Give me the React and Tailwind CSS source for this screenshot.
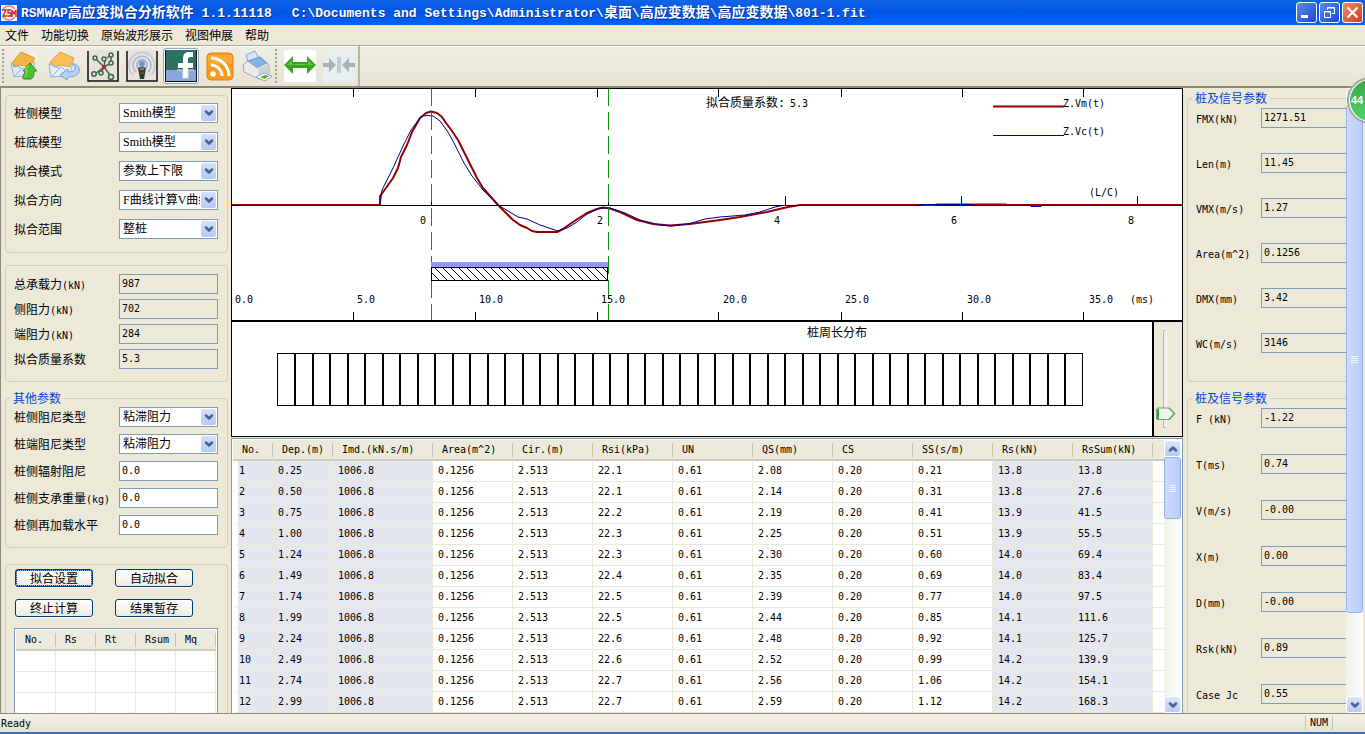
import React from "react";
import { ChevronDown, ChevronUp } from "lucide-react";

const menus = ["文件", "功能切换", "原始波形展示", "视图伸展", "帮助"];

const modelSelects = [
  { label: "桩侧模型", value: "Smith模型" },
  { label: "桩底模型", value: "Smith模型" },
  { label: "拟合模式", value: "参数上下限" },
  { label: "拟合方向", value: "F曲线计算V曲线" },
  { label: "拟合范围", value: "整桩" },
];

const results = [
  { label: "总承载力(kN)", value: "987" },
  { label: "侧阻力(kN)", value: "702" },
  { label: "端阻力(kN)", value: "284" },
  { label: "拟合质量系数", value: "5.3" },
];

const dampingSelects = [
  { label: "桩侧阻尼类型", value: "粘滞阻力" },
  { label: "桩端阻尼类型", value: "粘滞阻力" },
];

const otherInputs = [
  { label: "桩侧辐射阻尼", value: "0.0" },
  { label: "桩侧支承重量(kg)", value: "0.0" },
  { label: "桩侧再加载水平", value: "0.0" },
];

const signalA = [
  { label: "FMX(kN)", value: "1271.51" },
  { label: "Len(m)", value: "11.45" },
  { label: "VMX(m/s)", value: "1.27" },
  { label: "Area(m^2)", value: "0.1256" },
  { label: "DMX(mm)", value: "3.42" },
  { label: "WC(m/s)", value: "3146" },
];

const signalB = [
  { label: "F (kN)", value: "-1.22" },
  { label: "T(ms)", value: "0.74" },
  { label: "V(m/s)", value: "-0.00" },
  { label: "X(m)", value: "0.00" },
  { label: "D(mm)", value: "-0.00" },
  { label: "Rsk(kN)", value: "0.89" },
  { label: "Case Jc", value: "0.55" },
];

const columns = [
  { name: "No.", width: "w-[40px]", shaded: true },
  { name: "Dep.(m)", width: "w-[60px]", shaded: true },
  { name: "Imd.(kN.s/m)", width: "w-[100px]", shaded: true },
  { name: "Area(m^2)", width: "w-[80px]" },
  { name: "Cir.(m)", width: "w-[80px]" },
  { name: "Rsi(kPa)", width: "w-[80px]" },
  { name: "UN", width: "w-[80px]" },
  { name: "QS(mm)", width: "w-[80px]" },
  { name: "CS", width: "w-[80px]" },
  { name: "SS(s/m)", width: "w-[80px]" },
  { name: "Rs(kN)", width: "w-[80px]", shaded: true },
  { name: "RsSum(kN)", width: "w-[80px]", shaded: true },
];

const rows = [
  ["1", "0.25", "1006.8", "0.1256", "2.513", "22.1", "0.61", "2.08", "0.20", "0.21", "13.8", "13.8"],
  ["2", "0.50", "1006.8", "0.1256", "2.513", "22.1", "0.61", "2.14", "0.20", "0.31", "13.8", "27.6"],
  ["3", "0.75", "1006.8", "0.1256", "2.513", "22.2", "0.61", "2.19", "0.20", "0.41", "13.9", "41.5"],
  ["4", "1.00", "1006.8", "0.1256", "2.513", "22.3", "0.61", "2.25", "0.20", "0.51", "13.9", "55.5"],
  ["5", "1.24", "1006.8", "0.1256", "2.513", "22.3", "0.61", "2.30", "0.20", "0.60", "14.0", "69.4"],
  ["6", "1.49", "1006.8", "0.1256", "2.513", "22.4", "0.61", "2.35", "0.20", "0.69", "14.0", "83.4"],
  ["7", "1.74", "1006.8", "0.1256", "2.513", "22.5", "0.61", "2.39", "0.20", "0.77", "14.0", "97.5"],
  ["8", "1.99", "1006.8", "0.1256", "2.513", "22.5", "0.61", "2.44", "0.20", "0.85", "14.1", "111.6"],
  ["9", "2.24", "1006.8", "0.1256", "2.513", "22.6", "0.61", "2.48", "0.20", "0.92", "14.1", "125.7"],
  ["10", "2.49", "1006.8", "0.1256", "2.513", "22.6", "0.61", "2.52", "0.20", "0.99", "14.2", "139.9"],
  ["11", "2.74", "1006.8", "0.1256", "2.513", "22.7", "0.61", "2.56", "0.20", "1.06", "14.2", "154.1"],
  ["12", "2.99", "1006.8", "0.1256", "2.513", "22.7", "0.61", "2.59", "0.20", "1.12", "14.2", "168.3"],
];

// Latin runs are set in a 6px wide monospace beside the 12px hanzi
const Mixed = ({ text }) =>
  text.split(/([\x20-\x7e]+)/).map((part, i) =>
    i % 2 ? (
      <span key={i} className="font-['DejaVu_Sans_Mono',monospace] text-[10px] whitespace-pre">
        {part}
      </span>
    ) : (
      part
    )
  );

const SelectRow = ({ id, label, value }) => (
  <div className="flex h-5 items-center">
    <label htmlFor={id} className="w-[105px] shrink-0 whitespace-nowrap">
      <Mixed text={label} />
    </label>
    <div className="relative h-5 w-[99px] border border-[#7f9db9] bg-white">
      <select
        id={id}
        className="block h-full w-[80px] appearance-none overflow-hidden bg-transparent pl-[3px] font-['Liberation_Serif','Noto_Sans_CJK_SC',sans-serif] text-[12px] leading-4 text-clip outline-none"
      >
        <option>{value}</option>
      </select>
      <span className="pointer-events-none absolute top-px right-px flex h-4 w-[15px] items-center justify-center rounded-[2px] bg-gradient-to-b from-[#d3e0fd] to-[#b4c9f9]">
        <ChevronDown className="h-3 w-3 text-[#4d6185]" strokeWidth={5} />
      </span>
    </div>
  </div>
);

const InputRow = ({ id, label, value, readOnly }) => (
  <div className="flex h-5 items-center">
    <label htmlFor={id} className="w-[105px] shrink-0 whitespace-nowrap">
      <Mixed text={label} />
    </label>
    <input
      id={id}
      defaultValue={value}
      readOnly={readOnly}
      className={`h-5 w-[99px] border border-[#7f9db9] px-[2px] pb-[2px] font-['DejaVu_Sans_Mono',monospace] text-[10px] outline-none ${
        readOnly ? "bg-[#ece9d8]" : "bg-white"
      }`}
    />
  </div>
);

const SignalGroup = ({ prefix, items, gap }) => (
  <fieldset className="w-[200px] rounded border border-[#d0d0bf] pt-[2px] pr-2 pb-7 pl-2">
    <legend className="-ml-1 px-[3px] leading-4 text-[#0046d5]">桩及信号参数</legend>
    <div className={`flex flex-col ${gap}`}>
      {items.map((item) => (
        <div key={item.label} className="flex h-5 items-center">
          <label htmlFor={prefix + item.label} className="w-[65px] shrink-0 whitespace-nowrap">
            <Mixed text={item.label} />
          </label>
          <input
            id={prefix + item.label}
            readOnly
            defaultValue={item.value}
            className="h-5 w-[110px] border border-[#7f9db9] bg-[#ece9d8] px-[2px] pb-[2px] font-['DejaVu_Sans_Mono',monospace] text-[10px] outline-none"
          />
        </div>
      ))}
    </div>
  </fieldset>
);

const XpButton = ({ children, active }) => (
  <button
    className={`h-[18px] w-[78px] rounded-[3px] border border-[#003c74] bg-gradient-to-b from-white to-[#eceadf] p-px leading-[14px] shadow-[0_1px_0_#fff] ${
      active ? "ring-1 ring-[#8fb0ee] ring-inset" : ""
    }`}
  >
    <span className={active ? "block outline-1 outline-dotted outline-[#444]" : "block"}>{children}</span>
  </button>
);

const ScrollBar = ({ thumb }) => (
  <div className="flex w-[17px] shrink-0 flex-col bg-gradient-to-r from-[#f0efe9] to-[#fefefb]">
    <button
      aria-label="Scroll up"
      className="flex h-[17px] shrink-0 items-center justify-center rounded-[3px] border border-white bg-gradient-to-b from-[#dbe6fe] to-[#b7cbfa]"
    >
      <ChevronUp className="h-3 w-3 text-[#4d6185]" strokeWidth={5} />
    </button>
    <div className="min-h-0 flex-1">
      <div
        className={`flex w-full flex-col items-center justify-center gap-px rounded-[3px] border border-[#98b1e4] bg-gradient-to-r from-[#cbdafe] to-[#b9ccfb] ${thumb}`}
      >
        {[0, 1, 2, 3].map((n) => (
          <span key={n} className="h-px w-[7px] bg-[#eef4fe]" />
        ))}
      </div>
    </div>
    <button
      aria-label="Scroll down"
      className="flex h-[17px] shrink-0 items-center justify-center rounded-[3px] border border-white bg-gradient-to-b from-[#dbe6fe] to-[#b7cbfa]"
    >
      <ChevronDown className="h-3 w-3 text-[#4d6185]" strokeWidth={5} />
    </button>
  </div>
);

const TitleBar = () => (
  <header className="flex h-[25px] shrink-0 items-center bg-gradient-to-b from-[#1263e6] via-[#0055e5] to-[#0262fa] pr-[2px] pl-px text-white">
    <svg viewBox="0 0 16 16" className="h-4 w-4 shrink-0">
      <rect width="16" height="16" fill="#f4f4f4" />
      <circle cx="8" cy="8" r="7" fill="none" stroke="#d8898f" strokeWidth="1.500" />
      <rect y="4" width="16" height="8" fill="#f8eaea" />
      <path d="M1 5h4L2 11h4M10 5H7v3h3v3H6.500M11 12V5l2 4 2-4v7" fill="none" stroke="#d81f2a" strokeWidth="1.300" />
    </svg>
    <h1 className="flex flex-1 gap-5 overflow-hidden pl-1 text-[14px] leading-5 font-bold whitespace-nowrap [text-shadow:1px_1px_0_#0a2f8a]">
      <span>
        <span className="font-['Liberation_Mono',monospace] text-[13px]">RSMWAP</span>高应变拟合分析软件
        <span className="font-['Liberation_Mono',monospace] text-[13px] whitespace-pre"> 1.1.11118</span>
      </span>
      <span>
        <span className="font-['Liberation_Mono',monospace] text-[13px]">
          C:\Documents and Settings\Administrator\
        </span>
        桌面
        <span className="font-['Liberation_Mono',monospace] text-[13px]">\</span>
        高应变数据
        <span className="font-['Liberation_Mono',monospace] text-[13px]">\</span>
        高应变数据
        <span className="font-['Liberation_Mono',monospace] text-[13px]">\801-1.fit</span>
      </span>
    </h1>
    <div className="flex gap-[2px]">
      <button
        aria-label="Minimize"
        className="h-[21px] w-[21px] rounded-[3px] border border-white bg-gradient-to-br from-[#5b8bf0] to-[#1a48c8]"
      >
        <svg viewBox="0 0 19 19">
          <rect x="4" y="12" width="7" height="3" fill="#fff" />
        </svg>
      </button>
      <button
        aria-label="Restore"
        className="h-[21px] w-[21px] rounded-[3px] border border-white bg-gradient-to-br from-[#5b8bf0] to-[#1a48c8]"
      >
        <svg viewBox="0 0 19 19" fill="none" stroke="#fff">
          <path d="M7.500 7V4.500h7v6H12M7 5h8" />
          <path d="M4.500 8.500h6v6h-6zM4 9h7" />
        </svg>
      </button>
      <button
        aria-label="Close"
        className="h-[21px] w-[21px] rounded-[3px] border border-white bg-gradient-to-br from-[#f08a66] to-[#d03a12]"
      >
        <svg viewBox="0 0 19 19" fill="none" stroke="#fff" strokeWidth="2">
          <path d="M4.500 4.500l10 10M14.500 4.500l-10 10" />
        </svg>
      </button>
    </div>
  </header>
);

const Grip = () => <span className="h-[34px] w-0 border-l-2 border-dotted border-[#a5a294]" />;

const OpenIcon = () => (
  <svg viewBox="0 0 32 32" className="h-8 w-8">
    <circle cx="24" cy="7" r="5" fill="#f4f3ec" />
    <path d="M2 14l3 13 16-2 5-12-10-8z" fill="#dbe9fb" stroke="#8fb0dc" />
    <path d="M3 13L12 2l14 6-5 9-10-2-6 2z" fill="#f5b445" stroke="#dd9a35" />
    <path d="M5 27l8-9 8 6M3 14l9 4" fill="none" stroke="#8fb0dc" />
    <path d="M21 13l7 8h-3c0 5-1 8-4 8h-6c-2 0-1-3 0-5 1-1 1-2 0-3h-1z" fill="#4fc02f" stroke="#2a8a1c" />
    <path d="M20 15l-4 5h2c0 3-1 5-2 7" fill="none" stroke="#93de74" />
  </svg>
);

const SaveIcon = () => (
  <svg viewBox="0 0 32 32" className="h-8 w-8">
    <path d="M1 14l2 13 18-1 4-13-10-8z" fill="#e4effc" stroke="#8fb0dc" />
    <path d="M2 12L12 2l14 6-4 9-9-2-6 2z" fill="#f8be5c" stroke="#e0a245" />
    <path d="M3 27l10-10 7 5M1 14l10 4" fill="none" stroke="#8fb0dc" />
    <path d="M25 14c5 0 7 4 6 8-2 4-6 5-11 5l-1 3-7-5 8-6v3c4 0 7-1 7-4 0-2-1-3-2-4z" fill="#b6d0f5" stroke="#7c9fd4" />
  </svg>
);

const NetworkIcon = () => (
  <svg viewBox="0 0 32 32" className="h-8 w-8">
    <rect width="32" height="32" fill="#e6e2de" />
    <path d="M1 1v30h30V1" fill="none" stroke="#111" strokeWidth="1.500" />
    <path d="M17 17L8 8M17 17l1-7M20 8l4-3M17 17L8 24M17 17l6 8M14 23l3-6 7-4V7" fill="none" stroke="#3f6647" strokeWidth="1.500" />
    <g fill="#e6e2de" stroke="#3f6647" strokeWidth="1.500">
      <circle cx="8" cy="8" r="2" />
      <circle cx="17" cy="9" r="2" />
      <circle cx="24" cy="5" r="2" />
      <circle cx="24" cy="13" r="2" />
      <circle cx="7" cy="24" r="2.200" />
      <circle cx="14" cy="23" r="2" />
      <circle cx="24" cy="27" r="2.500" />
    </g>
    <rect x="15" y="15" width="4" height="4" fill="#c02a2a" />
  </svg>
);

const PodcastIcon = () => (
  <svg viewBox="0 0 32 32" className="h-8 w-8">
    <rect width="32" height="32" fill="#e6e2de" />
    <path d="M1 1v30h30V1" fill="none" stroke="#111" strokeWidth="1.500" />
    <g fill="none" strokeWidth="1.500">
      <path d="M7 25a13 13 0 1 1 18 0" stroke="#c4c6cc" />
      <path d="M10 22a9 9 0 1 1 12 0" stroke="#abb8d4" />
      <path d="M12 18a5 5 0 1 1 8 0" stroke="#87a2dc" />
    </g>
    <circle cx="16" cy="14" r="3" fill="#6f92dc" />
    <path d="M12 18q4-2 8 0l-2 11h-4z" fill="#2c3a2e" />
    <ellipse cx="16" cy="19" rx="2.500" ry="1.500" fill="#5d9b52" />
    <path d="M14 23h4" stroke="#b04a3a" />
  </svg>
);

const FacebookIcon = () => (
  <svg viewBox="0 0 32 32" className="h-8 w-8">
    <rect width="32" height="32" fill="#2c7262" />
    <rect y="20" width="32" height="11" fill="#8aa6da" />
    <path d="M.500 0v31.500H32M31.500 0v31" fill="none" stroke="#111" />
    <path d="M18 28V18h-5v-5h5V9c0-5 2-7 6-7h4v5h-3c-1 0-2 1-2 2v4h5v5h-5v10z" fill="#fff" />
    <path d="M12 20h6v8h5v-8h6" fill="none" stroke="#dfe7f5" strokeWidth="1" />
  </svg>
);

const RssIcon = () => (
  <svg viewBox="0 0 32 32" className="h-8 w-8">
    <rect x="3" y="3" width="26" height="27" rx="4" fill="#f79a1e" stroke="#e28413" />
    <path d="M4 5h24v9C18 12 10 14 4 18z" fill="#fbb54c" opacity="0.500" />
    <circle cx="9" cy="24" r="2.800" fill="#fff" />
    <path d="M7 15c6 0 11 5 11 11M7 8c10 0 18 8 18 18" fill="none" stroke="#fff" strokeWidth="3" />
  </svg>
);

const PrinterIcon = () => (
  <svg viewBox="0 0 32 32" className="h-8 w-8">
    <path d="M7 12L5 5l9-4 5 9z" fill="#d5e6fb" stroke="#86a7d6" />
    <path d="M7 11l12-4 7 6-10 5z" fill="#7fb4ee" stroke="#7088ab" />
    <path d="M2 15l5-4 9 7 10-5 2 3v8l-10 5L3 22z" fill="#ececef" stroke="#a5a8b0" />
    <path d="M17 19l10-5v9l-9 5z" fill="#cfd0d6" />
    <path d="M15 27l8-4 8 3-7 5z" fill="#fff" stroke="#87a9c8" />
    <path d="M19 27l5-2 4 1-4 3z" fill="#56ae33" />
  </svg>
);

const ToolBar = () => (
  <div className="flex h-[43px] shrink-0 items-center border-t border-b-2 border-t-[#aca899] border-b-[#8d897b] bg-gradient-to-b from-[#efeee4] to-[#e7e4d2] shadow-[inset_0_1px_0_#fff]">
    <div className="flex items-center pl-[2px]">
      <Grip />
      <div className="flex items-center gap-[3px] pl-[3px]">
        <button aria-label="打开" className="w-9 pl-[2px]"><OpenIcon /></button>
        <button aria-label="保存" className="w-9 pl-[2px]"><SaveIcon /></button>
        <button aria-label="网络" className="w-9 pl-[2px]"><NetworkIcon /></button>
        <button aria-label="采集" className="w-9 pl-[2px]"><PodcastIcon /></button>
        <button aria-label="拟合" className="flex h-9 w-9 items-center justify-center rounded-[3px] border border-[#8ca9c8] bg-white">
          <FacebookIcon />
        </button>
        <button aria-label="订阅" className="w-9 pl-[2px]"><RssIcon /></button>
        <button aria-label="打印" className="w-[34px]"><PrinterIcon /></button>
      </div>
    </div>
    <div className="flex h-full items-center gap-[7px] border-r-2 border-[#b8b5a5] pr-[3px]">
      <Grip />
      <button aria-label="展开" className="bg-white">
        <svg viewBox="0 0 32 32" className="h-8 w-8">
          <path d="M0 15l9-9v6h14V6l9 9-9 9v-6H9v6z" fill="#3aa61e" />
          <path d="M3 15l5-5v4h16v-4l5 5z" fill="#63c443" />
        </svg>
      </button>
      <button aria-label="收缩" className="bg-[#e6eef0]">
        <svg viewBox="0 0 32 32" className="h-8 w-8" fill="#a9b0b4">
          <path d="M0 13h6V8l7 7-7 7v-5H0zM32 13h-6V8l-7 7 7 7v-5h6z" />
          <rect x="14" y="7" width="4" height="16" rx="1" fill="#c3c9cc" />
        </svg>
      </button>
    </div>
  </div>
);

const WaveChart = () => (
  <svg viewBox="1 1 950 231" className="block w-full bg-white font-['DejaVu_Sans_Mono','Noto_Sans_CJK_SC',monospace]">
    <defs>
      <pattern id="hatch" width="8" height="8" patternUnits="userSpaceOnUse">
        <path d="M0 0l8 8M-4 4l8 8M4 -4l8 8" stroke="#000" strokeWidth="0.500" />
        <path d="M0 0l8 8" stroke="#000" />
      </pattern>
    </defs>
    <path d="M0 117.500H952" stroke="#000" shapeRendering="crispEdges" />
    <g stroke="#000" shapeRendering="crispEdges">
      {[122, 244, 366, 487, 610, 731, 852].map((x) => (
        <path key={x} d={`M${x + 0.5} 0v9M${x + 0.5} 224v9`} />
      ))}
      {[200, 377, 554, 730, 906].map((x) => (
        <path key={x} d={`M${x + 0.5} 108v9`} />
      ))}
    </g>
    <path
      d="M0 117H149V108L155 100 162 90 167 80 170 69 176 57 181 44 189 30 195 25 200 23.500 206 25 211 29 215 35 221 43 227 52 235 68 241 80 246 90 252 100 267 117 275 125 282 132 289 137 296 140 301 143 306 144H326L332 141 339 136 348 130 356 125 366 121 372 119.500 379 120.500 389 124 406 132 422 136 439 137.500 459 136 489 132 509 129 536 124 557 119 569 117H705V116.500H775V117H952"
      fill="none"
      stroke="#960000"
      strokeWidth="2"
      strokeLinejoin="round"
    />
    <path
      d="M0 117.500H149L151 102 162 80 173 56 180 42 189 30 192 28 196 27.500 202 28 209 33 217 44 223 55 233 75 241 88 252 102 267 117 277 123 287 129 296 131 309 137 327 143 336 140 346 134 356 126 369 120 379 120 394 125 409 132 429 137 441 138 459 135.500 474 131 489 129 514 127 529 124 544 119 552 117.500H690V116.500H740V117.500H800V118.500H810V117.500H952"
      fill="none"
      stroke="#000096"
    />
    <path d="M200.500 0V233M377.500 0V233" stroke="#009614" strokeDasharray="18 6" shapeRendering="crispEdges" />
    <rect x="200" y="174" width="177" height="6" fill="#9696fa" />
    <rect x="200.500" y="179.500" width="176" height="13" fill="#fff" />
    <rect x="200.500" y="179.500" width="176" height="13" fill="url(#hatch)" stroke="#000" />
    <path d="M762 18.500H833" stroke="#960000" strokeWidth="2" />
    <path d="M762 47.500H833" stroke="#000096" shapeRendering="crispEdges" />
    <g fontSize="10">
      <text x="475" y="19" fontSize="12">拟合质量系数:</text>
      <text x="559" y="19">5.3</text>
      <text x="832" y="19">Z.Vm(t)</text>
      <text x="832" y="47">Z.Vc(t)</text>
      <text x="858" y="108">(L/C)</text>
      <text x="899" y="215">(ms)</text>
      {["0", "2", "4", "6", "8"].map((n, i) => (
        <text key={n} x={189 + i * 177} y="136">{n}</text>
      ))}
      {["0.0", "5.0", "10.0", "15.0", "20.0", "25.0", "30.0", "35.0"].map((n, i) => (
        <text key={n} x={4 + i * 122} y="215">{n}</text>
      ))}
    </g>
  </svg>
);

const PileChart = () => (
  <svg viewBox="1 0 920 114" className="block w-full bg-white">
    <text x="576" y="15" fontSize="12">桩周长分布</text>
    <g fill="none" stroke="#000" shapeRendering="crispEdges">
      <rect x="46.500" y="31.500" width="805" height="52" />
      {Array.from({ length: 45 }, (_, i) => (
        <path key={i} d={`M${Math.round(46.5 + (i + 1) * 17.5)} 31v52`} strokeWidth="2" />
      ))}
    </g>
  </svg>
);

const ElementTable = () => (
  <div className="flex min-h-0 flex-1 border border-b-0 border-[#7f9db9] bg-white pt-px pr-px pl-px">
    <div className="min-w-0 flex-1 overflow-hidden">
      <table className="w-full table-fixed border-separate border-spacing-0 text-left font-['DejaVu_Sans_Mono',monospace] text-[10px]">
        <thead>
          <tr className="bg-[#ebeadb]">
            {columns.map((c) => (
              <th key={c.name} className={`h-[21px] border-b-2 border-[#d0cdbc] p-0 font-normal whitespace-nowrap ${c.width}`}>
                <div className="flex h-[14px] items-center border-r border-[#c7c5b2] pl-[9px] leading-[14px]">{c.name}</div>
              </th>
            ))}
            <th className="border-b-2 border-[#d0cdbc] p-0" aria-label="spacer" />
          </tr>
        </thead>
        <tbody>
          {rows.map((row) => (
            <tr key={row[0]}>
              {row.map((cell, i) => (
                <td
                  key={i}
                  className={`h-[21px] border-r border-b border-r-[#ece9d8] border-b-[#ece9d8] py-0 pr-0 leading-4 ${
                    i === 0 ? "border-l-[5px] border-l-white pl-px" : "pl-[5px]"
                  } ${columns[i].shaded ? "bg-[#e4e7f0]" : "bg-white"}`}
                >
                  {cell}
                </td>
              ))}
              <td className="border-b border-[#ece9d8] p-0" />
            </tr>
          ))}
        </tbody>
      </table>
    </div>
    <ScrollBar thumb="h-[26%]" />
  </div>
);

const LeftPanel = () => (
  <aside className="flex w-[231px] shrink-0 flex-col overflow-hidden border-l border-[#8d897b] pt-[7px] pr-[3px] pl-1">
    <fieldset className="mb-3 flex shrink-0 flex-col gap-[9px] rounded border border-[#d0d0bf] pt-[7px] pb-[13px] pl-2">
      {modelSelects.map((row) => (
        <SelectRow key={row.label} id={row.label} {...row} />
      ))}
    </fieldset>
    <fieldset className="mb-2 flex shrink-0 flex-col gap-[5px] rounded border border-[#d0d0bf] pt-2 pb-3 pl-2">
      {results.map((row) => (
        <InputRow key={row.label} id={row.label} {...row} readOnly />
      ))}
    </fieldset>
    <fieldset className="mb-4 shrink-0 rounded border border-[#d0d0bf] pt-px pb-3 pl-2">
      <legend className="-ml-1 px-[3px] leading-4 text-[#0046d5]">其他参数</legend>
      <div className="flex flex-col gap-[7px]">
        {dampingSelects.map((row) => (
          <SelectRow key={row.label} id={row.label} {...row} />
        ))}
        {otherInputs.map((row) => (
          <InputRow key={row.label} id={row.label} {...row} />
        ))}
      </div>
    </fieldset>
    <fieldset className="flex min-h-0 flex-1 flex-col rounded-t border border-b-0 border-[#d0d0bf] pt-1 pr-[9px] pl-2">
      <div className="grid w-fit grid-cols-2 gap-x-[22px] gap-y-3 pl-px">
        <XpButton active>拟合设置</XpButton>
        <XpButton>自动拟合</XpButton>
        <XpButton>终止计算</XpButton>
        <XpButton>结果暂存</XpButton>
      </div>
      <div className="mt-[11px] min-h-0 flex-1 overflow-hidden border border-b-0 border-[#7f9db9] bg-white p-px">
        <table className="w-full table-fixed border-separate border-spacing-0 text-left font-['DejaVu_Sans_Mono',monospace] text-[10px]">
          <thead>
            <tr className="bg-[#ebeadb]">
              {["No.", "Rs", "Rt", "Rsum", "Mq"].map((name) => (
                <th key={name} className="h-[21px] border-b-2 border-[#d0cdbc] p-0 font-normal">
                  <div className="h-[14px] border-r border-[#c7c5b2] pl-[9px] leading-[14px]">{name}</div>
                </th>
              ))}
            </tr>
          </thead>
          <tbody>
            {[0, 1, 2, 3].map((r) => (
              <tr key={r}>
                {[0, 1, 2, 3, 4].map((c) => (
                  <td key={c} className="h-[21px] border-r border-b border-[#ece9d8] p-0" />
                ))}
              </tr>
            ))}
          </tbody>
        </table>
      </div>
    </fieldset>
  </aside>
);

const App = () => {
  return (
    <div className="relative flex h-screen flex-col overflow-hidden bg-[#ece9d8] font-['Noto_Sans_CJK_SC',sans-serif] text-[12px] text-black">
      <TitleBar />
      <nav className="flex h-5 shrink-0 items-center gap-3 pl-[5px]">
        {menus.map((m) => (
          <button key={m} className="leading-5">{m}</button>
        ))}
      </nav>
      <ToolBar />

      <div className="flex min-h-0 flex-1">
        <LeftPanel />
        <main className="flex min-w-0 flex-1 flex-col">
          <div className="shrink-0 border border-b-2 border-black">
            <WaveChart />
          </div>
          <div className="mb-px flex shrink-0 border border-t-0 border-black">
            <div className="min-w-0 flex-1">
              <PileChart />
            </div>
            <div className="relative flex w-[30px] items-start justify-center border-l-2 border-black">
              <svg viewBox="0 0 28 112" className="h-28 w-7">
                <rect x="9" y="8" width="4" height="98" rx="2" fill="#fff" />
                <rect x="9" y="8" width="3" height="98" rx="1" fill="#bdbbb0" />
                <rect x="10" y="9" width="2" height="96" fill="#efeee8" />
                <path d="M2.500 87.500q0-1.500 1.500-1.500H15l5.500 5.500L15 97.500H4q-1.500 0-1.500-1.500z" fill="#f3f3ef" stroke="#7e8f96" />
                <path d="M4 87v10" stroke="#21b321" strokeWidth="2" />
                <path d="M15 86l5.500 5.500L15 97.500" fill="none" stroke="#4fb558" strokeWidth="1.500" />
              </svg>
              <input type="range" aria-label="缩放" defaultValue={15} className="absolute inset-0 h-full w-full opacity-0 [writing-mode:vertical-lr]" />
            </div>
          </div>
          <ElementTable />
        </main>
        <aside className="flex w-[182px] shrink-0 pr-[2px] pl-1">
          <div className="flex min-w-0 flex-1 flex-col gap-2 overflow-hidden pt-[2px]">
            <SignalGroup prefix="a-" items={signalA} gap="gap-[25px]" />
            <SignalGroup prefix="b-" items={signalB} gap="gap-[26px]" />
          </div>
          <ScrollBar thumb="h-[86%]" />
        </aside>
      </div>

      <footer className="flex h-[21px] shrink-0 items-center border-t border-b-2 border-t-[#8d897b] border-b-[#3a6ebd] bg-gradient-to-b from-[#f3f2e8] to-[#e6e3d0] pl-px font-['DejaVu_Sans_Mono',monospace] text-[10px]">
        <span className="flex-1">Ready</span>
        <span className="border-x border-[#c5c2b0] px-1 leading-[14px]">NUM</span>
        <span className="w-8" />
      </footer>

      {/* floating score bubble, half off the right edge */}
      <div className="absolute top-[77px] -right-[29px] h-[47px] w-[47px] rounded-full border-2 border-[#a9a9a3] bg-white p-px">
        <div className="h-full rounded-full bg-gradient-to-b from-[#3aa84d] to-[#4fd465] pl-px font-['Liberation_Sans',sans-serif] text-[11px] leading-[41px] font-bold text-white">
          44
        </div>
      </div>
    </div>
  );
};

export default App;
